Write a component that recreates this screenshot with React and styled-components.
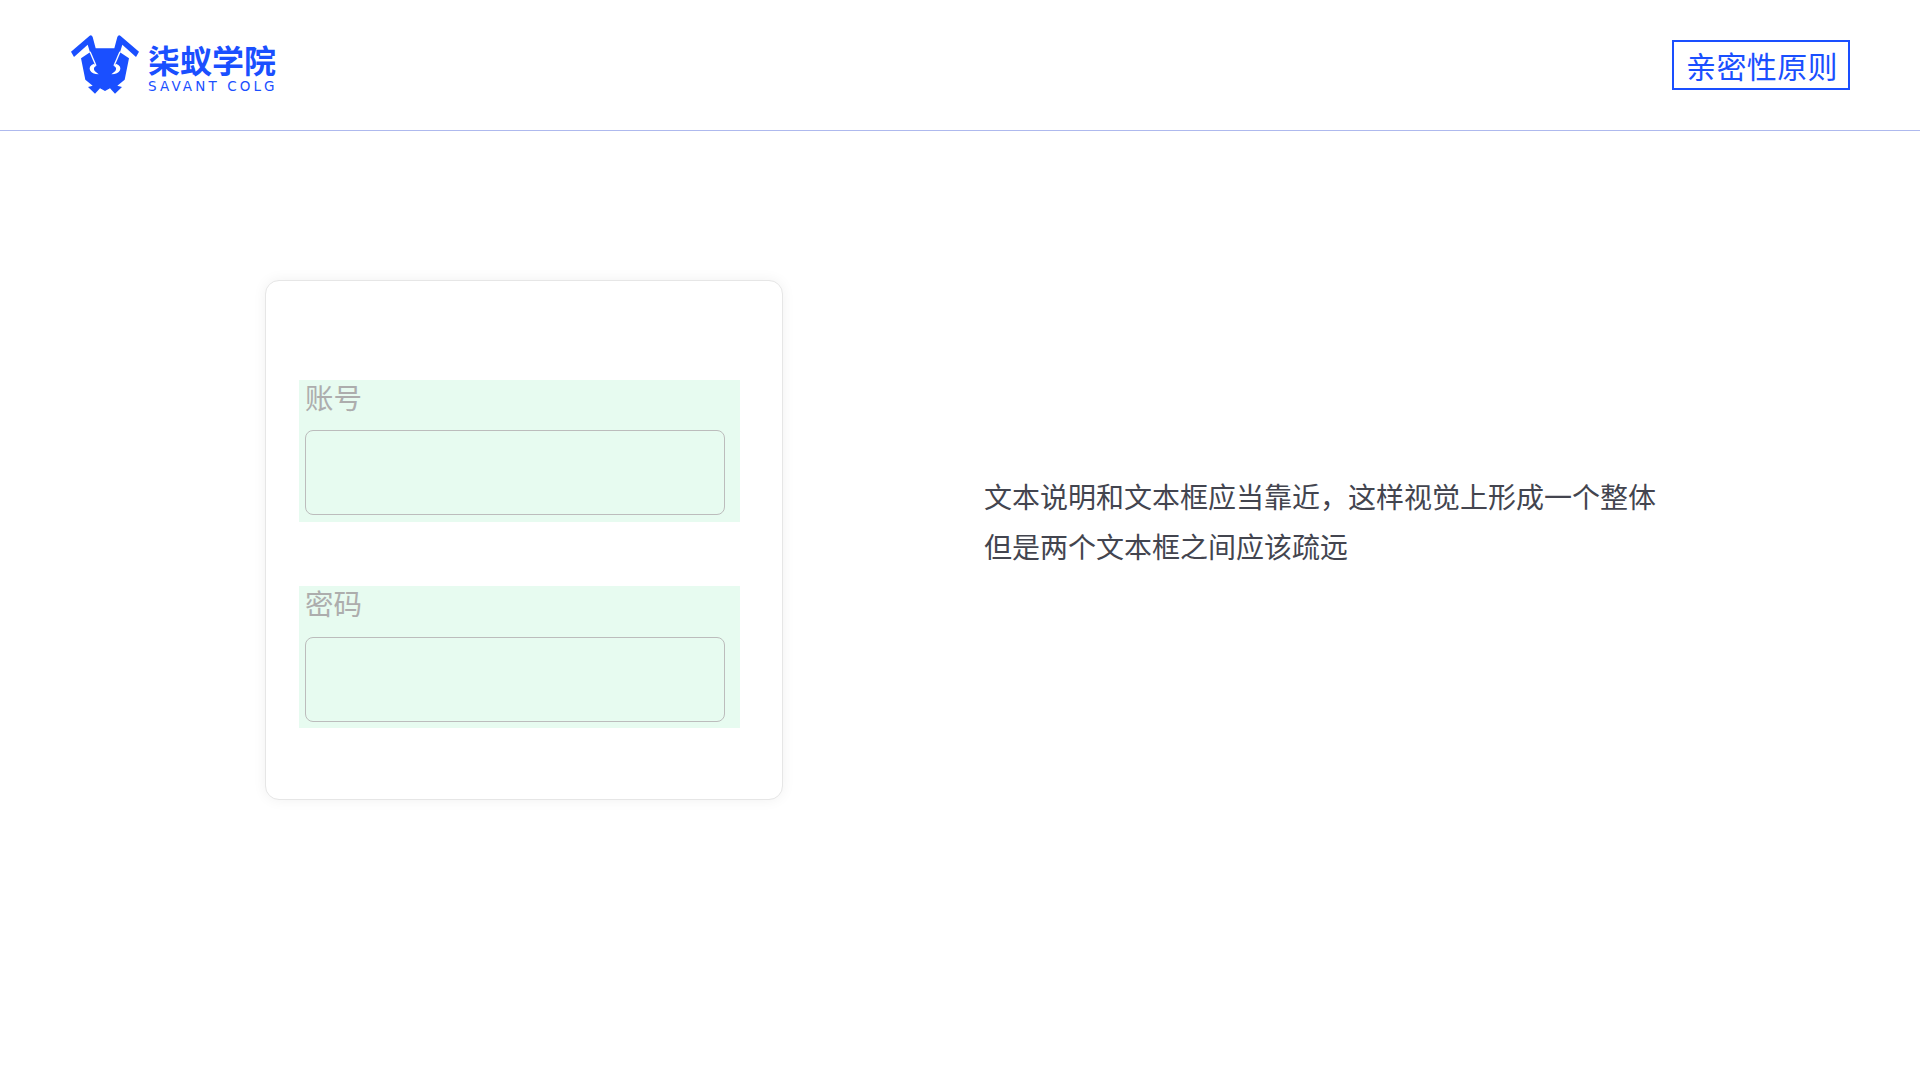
import styled, { createGlobalStyle } from "styled-components";

const GlobalStyle = createGlobalStyle`
  html, body {
    margin: 0;
    padding: 0;
    background: #fff;
  }
  body {
    font-family: "Noto Sans CJK SC", "Liberation Sans", sans-serif;
  }
`;

const Page = styled.div`
  width: 1920px;
  height: 1080px;
  overflow: hidden;
  background: #fff;
`;

const Header = styled.header`
  height: 130px;
  box-sizing: content-box;
  display: flex;
  align-items: center;
  justify-content: space-between;
  padding: 0 70px;
  border-bottom: 1px solid #aeb9ee;
`;

const Logo = styled.div`
  display: flex;
  align-items: center;
  gap: 8px;
`;

const LogoText = styled.div`
  display: flex;
  flex-direction: column;
  gap: 4px;
  margin-top: 5px;
`;

const LogoTitle = styled.span`
  font-size: 32px;
  line-height: 32px;
  font-weight: 700;
  color: #1a4fff;
  white-space: nowrap;
`;

const LogoSub = styled.span`
  font-family: "DejaVu Sans", sans-serif;
  font-size: 13.5px;
  line-height: 14px;
  letter-spacing: 3.1px;
  font-weight: 400;
  color: #1a4fff;
  white-space: nowrap;
`;

const TopicTag = styled.div`
  box-sizing: border-box;
  width: 178px;
  height: 50px;
  padding-left: 2px;
  border: 2px solid #1a4fff;
  color: #1a4fff;
  font-size: 30px;
  line-height: 46px;
  letter-spacing: 0.4px;
  text-align: center;
  white-space: nowrap;
`;

const Main = styled.main`
  display: flex;
  align-items: flex-start;
  gap: 201px;
  padding: 149px 0 0 265px;
`;

const Card = styled.div`
  box-sizing: border-box;
  width: 518px;
  height: 520px;
  padding: 99px 0 0 33px;
  display: flex;
  flex-direction: column;
  gap: 64px;
  background: #fff;
  border: 1px solid #e6e6e6;
  border-radius: 14px;
  box-shadow: 0 0 14px rgba(0, 0, 0, 0.06);
`;

const Field = styled.div`
  box-sizing: border-box;
  width: 441px;
  height: 142px;
  padding: 0 6px;
  background: #e7fbf0;
`;

const FieldLabel = styled.label`
  display: block;
  height: ${(props) => props.$height}px;
  font-size: 28.5px;
  line-height: 33px;
  color: #adadad;
`;

const FieldInput = styled.input`
  display: block;
  box-sizing: border-box;
  width: 420px;
  height: 85px;
  padding: 0 12px;
  background: transparent;
  border: 1px solid #bcbcbc;
  border-radius: 8px;
  outline: none;
`;

const Description = styled.p`
  margin: 191px 0 0;
  font-size: 28px;
  line-height: 50px;
  color: #43454f;
  white-space: nowrap;
`;

const AntIcon = () => (
  <svg width="70" height="60" viewBox="0 0 210 180" aria-hidden="true">
    <path
      fill="#1a4fff"
      d="M77 40 L68 6 Q65 -1 59 2 L3 50 L12 66 L53 29 L60 52 L33 70 L46 134 L68 152 L54 156 L75 176 L90 160 L105 168 L120 160 L135 176 L156 156 L142 152 L164 134 L177 70 L150 52 L157 29 L198 66 L207 50 L151 2 Q145 -1 142 6 L133 40 Z"
    />
    <g fill="none" stroke="#fff" strokeWidth="4">
      <path d="M60 50 L78 92" />
      <path d="M150 50 L132 92" />
    </g>
    <path
      fill="#fff"
      d="M72 86 Q55 92 60 106 Q66 118 86 118 L74 108 Q68 98 78 93 Z M138 86 Q155 92 150 106 Q144 118 124 118 L136 108 Q142 98 132 93 Z"
    />
  </svg>
);

const App = () => {
  return (
    <Page>
      <GlobalStyle />
      <Header>
        <Logo>
          <AntIcon />
          <LogoText>
            <LogoTitle>柒蚁学院</LogoTitle>
            <LogoSub>SAVANT COLG</LogoSub>
          </LogoText>
        </Logo>
        <TopicTag>亲密性原则</TopicTag>
      </Header>
      <Main>
        <Card>
          <Field>
            <FieldLabel $height={50}>账号</FieldLabel>
            <FieldInput type="text" />
          </Field>
          <Field>
            <FieldLabel $height={51}>密码</FieldLabel>
            <FieldInput type="password" />
          </Field>
        </Card>
        <Description>
          文本说明和文本框应当靠近，这样视觉上形成一个整体
          <br />
          但是两个文本框之间应该疏远
        </Description>
      </Main>
    </Page>
  );
};

export default App;
